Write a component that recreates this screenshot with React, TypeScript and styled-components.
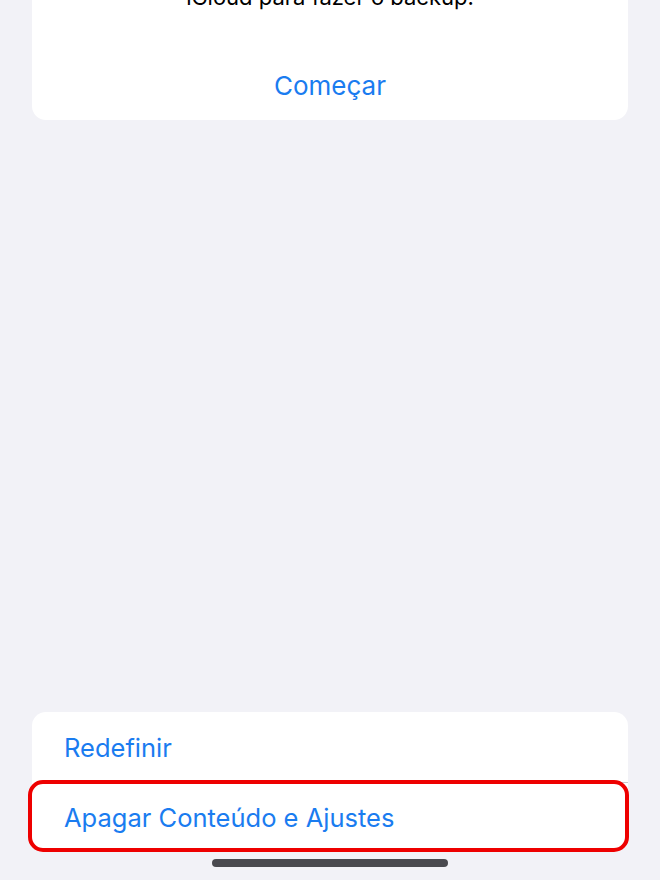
import React from 'react';
import styled, { createGlobalStyle } from 'styled-components';

const GlobalStyle = createGlobalStyle`
  html, body {
    margin: 0;
    padding: 0;
    background: #f2f2f7;
  }
  body {
    font-family: Inter, "Noto Sans", "Liberation Sans", sans-serif;
    -webkit-font-smoothing: antialiased;
  }
`;

const Page = styled.div`
  height: 880px;
  overflow: hidden;
  padding: 0 32px;
  box-sizing: border-box;
  display: flex;
  flex-direction: column;
  background: #f2f2f7;
`;

const Card = styled.section<{ $top?: boolean }>`
  background: #ffffff;
  border-radius: 14px;
  ${({ $top }) => ($top ? 'margin-top: -18px; padding: 0 24px 17px;' : '')}
  display: flex;
  flex-direction: column;
`;

const Message = styled.p`
  margin: 0;
  font-size: 22px;
  line-height: 30px;
  color: #000000;
  text-align: center;
`;

const ActionLink = styled.div`
  margin-top: 57px;
  font-size: 26px;
  line-height: 34px;
  color: #1a7cf0;
  text-align: center;
`;

const Spacer = styled.div`
  flex: 1;
`;

const Row = styled.div<{ $divider?: boolean }>`
  position: relative;
  height: 70px;
  display: flex;
  align-items: center;
  padding-left: 32px;
  font-size: 25.5px;
  color: #1a7cf0;

  ${({ $divider }) =>
    $divider
      ? `&:after {
    content: '';
    position: absolute;
    left: 32px;
    right: 0;
    bottom: -1px;
    height: 1px;
    background: #c8c8cc;
  }`
      : ''}
`;

const Highlight = styled.div`
  position: absolute;
  top: -2px;
  bottom: 0;
  left: -4px;
  right: -1px;
  border: 4px solid #ee0000;
  border-radius: 15px;
  pointer-events: none;
`;

const HomeIndicator = styled.div`
  align-self: center;
  width: 236px;
  height: 8px;
  border-radius: 4px;
  background: #4a4a4f;
  margin: 7px 0 13px;
`;

const App: React.FC = () => {
  return (
    <>
      <GlobalStyle />
      <Page>
        <Card $top>
          <Message>iCloud para fazer o backup.</Message>
          <ActionLink>Começar</ActionLink>
        </Card>
        <Spacer />
        <Card>
          <Row $divider>Redefinir</Row>
          <Row>
            Apagar Conteúdo e Ajustes
            <Highlight />
          </Row>
        </Card>
        <HomeIndicator />
      </Page>
    </>
  );
};

export default App;
